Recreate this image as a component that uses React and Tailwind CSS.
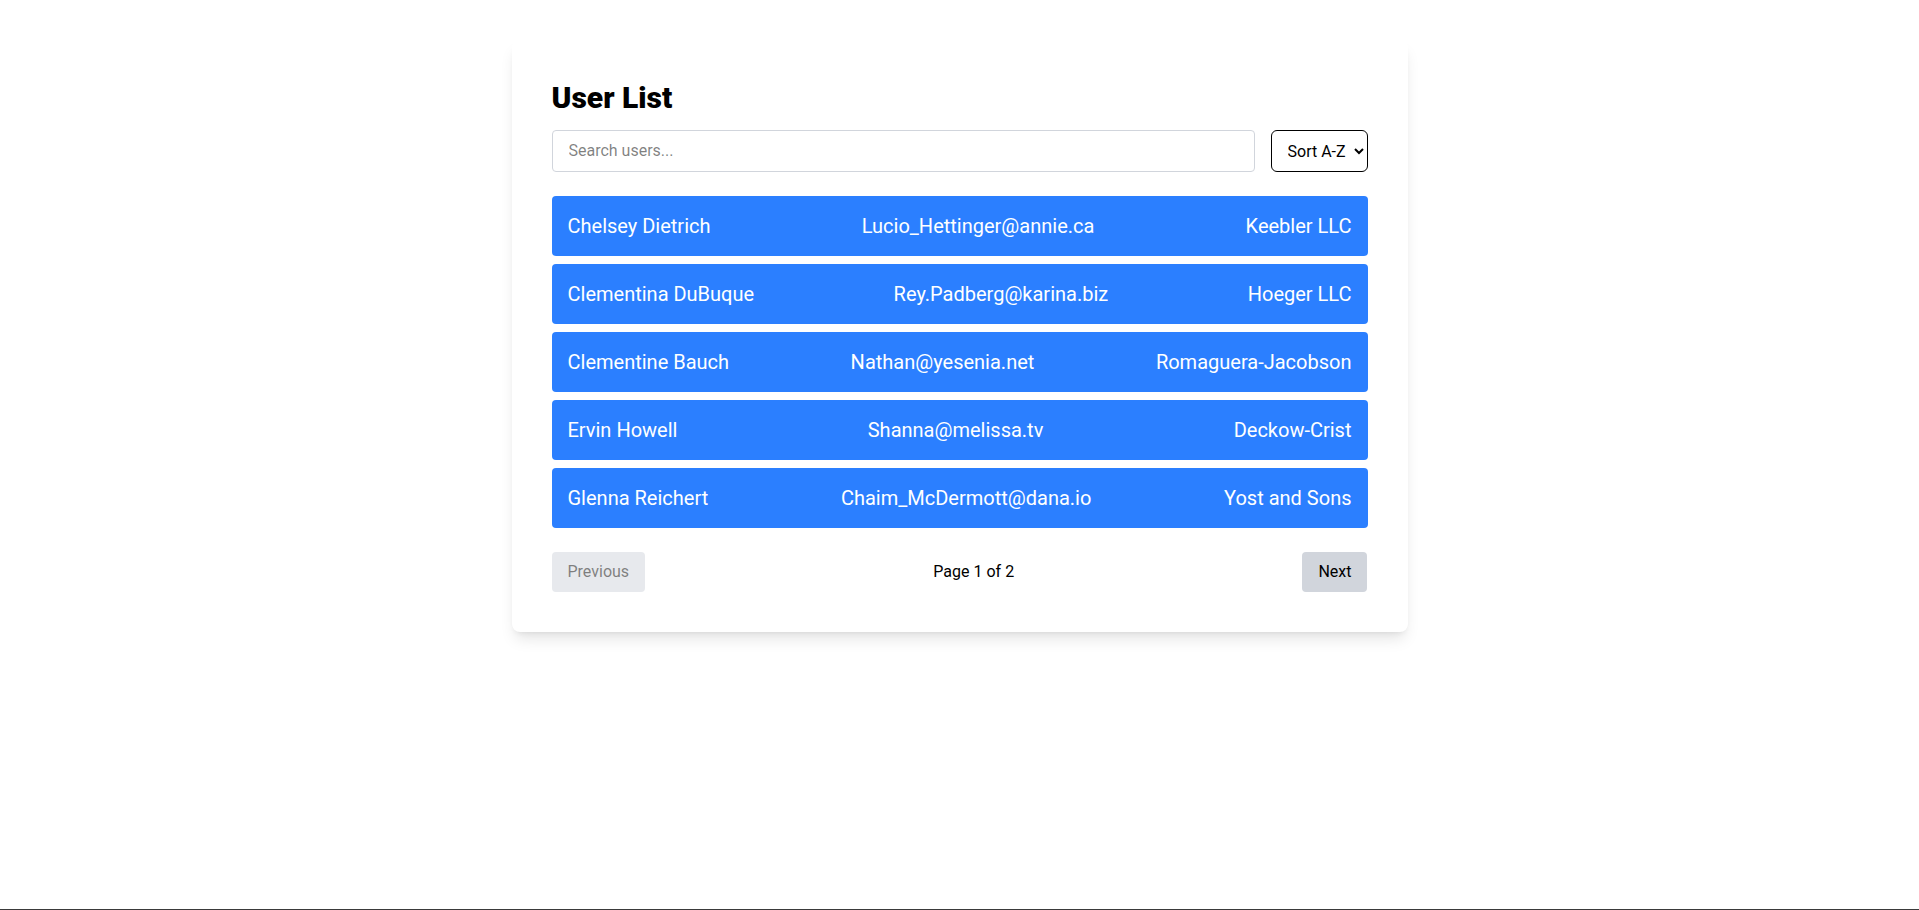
import { useState } from 'react';

const users = [
  { name: 'Chelsey Dietrich', email: 'Lucio_Hettinger@annie.ca', company: 'Keebler LLC' },
  { name: 'Clementina DuBuque', email: 'Rey.Padberg@karina.biz', company: 'Hoeger LLC' },
  { name: 'Clementine Bauch', email: 'Nathan@yesenia.net', company: 'Romaguera-Jacobson' },
  { name: 'Ervin Howell', email: 'Shanna@melissa.tv', company: 'Deckow-Crist' },
  { name: 'Glenna Reichert', email: 'Chaim_McDermott@dana.io', company: 'Yost and Sons' },
];

export default function App() {
  const [search, setSearch] = useState('');
  const [sort, setSort] = useState('asc');
  const page = 1;
  const totalPages = 2;

  return (
    <div className="h-screen bg-white border-b border-[#3a3a3a] pt-10 font-['Roboto',sans-serif]">
      <div className="max-w-4xl mx-auto p-10 bg-white rounded-lg shadow-lg">
        <h1 className="text-3xl font-black text-black mb-[14px]">User List</h1>

        <div className="flex gap-4 mb-6">
          <input
            value={search}
            onChange={e => setSearch(e.target.value)}
            placeholder="Search users..."
            className="flex-1 px-4 py-2 text-base border border-gray-300 rounded focus:outline-none"
          />
          <select value={sort} onChange={e => setSort(e.target.value)} className="pl-3 pr-1 text-base text-black border border-black rounded-md bg-white">
            <option value="asc">Sort A-Z</option>
            <option value="desc">Sort Z-A</option>
          </select>
        </div>

        <ul className="space-y-2">
          {users.map(u => (
            <li key={u.name} className="flex justify-between p-4 text-xl text-white bg-[#2b7fff] rounded">
              <span>{u.name}</span>
              <span>{u.email}</span>
              <span>{u.company}</span>
            </li>
          ))}
        </ul>

        <div className="flex items-center justify-between mt-6">
          <button disabled className="px-4 py-2 text-base text-black bg-gray-300 rounded disabled:opacity-50">Previous</button>
          <span className="text-base text-black">Page {page} of {totalPages}</span>
          <button className="px-4 py-2 text-base text-black bg-gray-300 rounded">Next</button>
        </div>
      </div>
    </div>
  );
}
